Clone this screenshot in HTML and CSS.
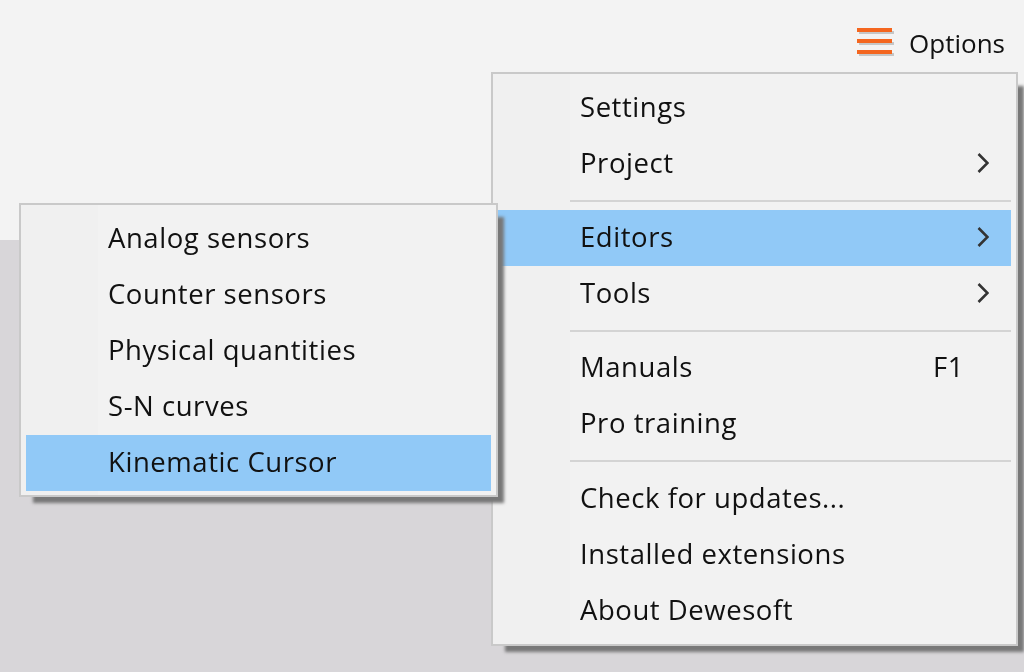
FILE: index.html
```html
<!DOCTYPE html>
<html lang="en">
<head>
  <meta charset="UTF-8" />
  <meta name="viewport" content="width=device-width, initial-scale=1.0" />
  <title>Options menu</title>
  <link rel="stylesheet" href="styles.css">
</head>
<body>
  <header class="top">
    <div class="options">
      <svg class="burger" width="40" height="36" viewBox="0 0 40 36" aria-hidden="true">
        <g fill="#c6c6c6">
          <rect x="2" y="6" width="35" height="3" />
          <rect x="2" y="17" width="35" height="3" />
          <rect x="2" y="28" width="35" height="3" />
        </g>
        <g fill="#f4661f">
          <rect x="0" y="3" width="35" height="4" />
          <rect x="0" y="14" width="35" height="4" />
          <rect x="0" y="25" width="35" height="4" />
        </g>
      </svg>
      <span>Options</span>
    </div>
  </header>
  <div class="lower"></div>

  <nav class="menu main-menu">
    <div class="item">Settings</div>
    <div class="item">Project<svg class="arrow" width="12" height="20" viewBox="0 0 12 20"><path d="M1.5 1l9 9-9 9" /></svg></div>
    <div class="sep"></div>
    <div class="item active">Editors<svg class="arrow" width="12" height="20" viewBox="0 0 12 20"><path d="M1.5 1l9 9-9 9" /></svg></div>
    <div class="item">Tools<svg class="arrow" width="12" height="20" viewBox="0 0 12 20"><path d="M1.5 1l9 9-9 9" /></svg></div>
    <div class="sep"></div>
    <div class="item">Manuals<span class="key">F1</span></div>
    <div class="item">Pro training</div>
    <div class="sep wide"></div>
    <div class="item">Check for updates...</div>
    <div class="item">Installed extensions</div>
    <div class="item">About Dewesoft</div>
  </nav>

  <nav class="menu sub-menu">
    <div class="item">Analog sensors</div>
    <div class="item">Counter sensors</div>
    <div class="item">Physical quantities</div>
    <div class="item">S-N curves</div>
    <div class="item active">Kinematic Cursor</div>
  </nav>
</body>
</html>
```

FILE: styles.css
```css
* {
  margin: 0;
  padding: 0;
  box-sizing: border-box;
}

:root {
  --bg: #f3f3f3;
  --lower: #d8d6d9;
  --menu: #f2f2f2;
  --gutter: #f0f0f0;
  --border: #c9c9c9;
  --active: #91c9f7;
  --fg: #111;
}

html, body {
  height: 100%;
  overflow: hidden;
}

body {
  display: flex;
  flex-direction: column;
  font-family: "Open Sans", "Noto Sans", sans-serif;
  font-size: 27.5px;
  color: var(--fg);
  background: var(--bg);
  filter: blur(0.4px); /* the reference is an upscaled capture */
}

/* --- page behind the menus ------------------------------------------ */
.top {
  height: 240px;
  background: var(--bg);
  display: flex;
  justify-content: flex-end;
  align-items: flex-start;
  padding: 25px 19px 0 0;
}

.options {
  display: flex;
  align-items: center;
  gap: 12px;
  height: 36px;
  font-size: 26px;
}

.lower {
  flex: 1;
  background: var(--lower);
}

/* --- popup menus ---------------------------------------------------- */
.menu {
  position: absolute;
  border: 2px solid var(--border);
  box-shadow: 10px 10px 3px -4px #787878;
  padding: 6px 5px 5px;
  background: linear-gradient(to right, var(--gutter) 77px, var(--menu) 77px);
}

.main-menu {
  left: 491px;
  top: 72px;
  width: 527px;
  height: 574px;
}

.sub-menu {
  left: 19px;
  top: 203px;
  width: 479px;
  height: 294px;
}

.item {
  position: relative;
  display: flex;
  align-items: center;
  height: 56px;
  padding: 0 0 4px 82px;
  letter-spacing: 0.55px;
  white-space: nowrap;
}

.item.active {
  background: var(--active);
}

.sep {
  height: 2px;
  margin: 8px 0 8px 72px;
  background: #d4d4d4;
}

.sep.wide {
  margin-bottom: 9px;
}

.arrow {
  position: absolute;
  right: 22px;
  top: 17px;
  fill: none;
  stroke: #333;
  stroke-width: 2.6;
}

.key {
  position: absolute;
  right: 47px;
}
```
